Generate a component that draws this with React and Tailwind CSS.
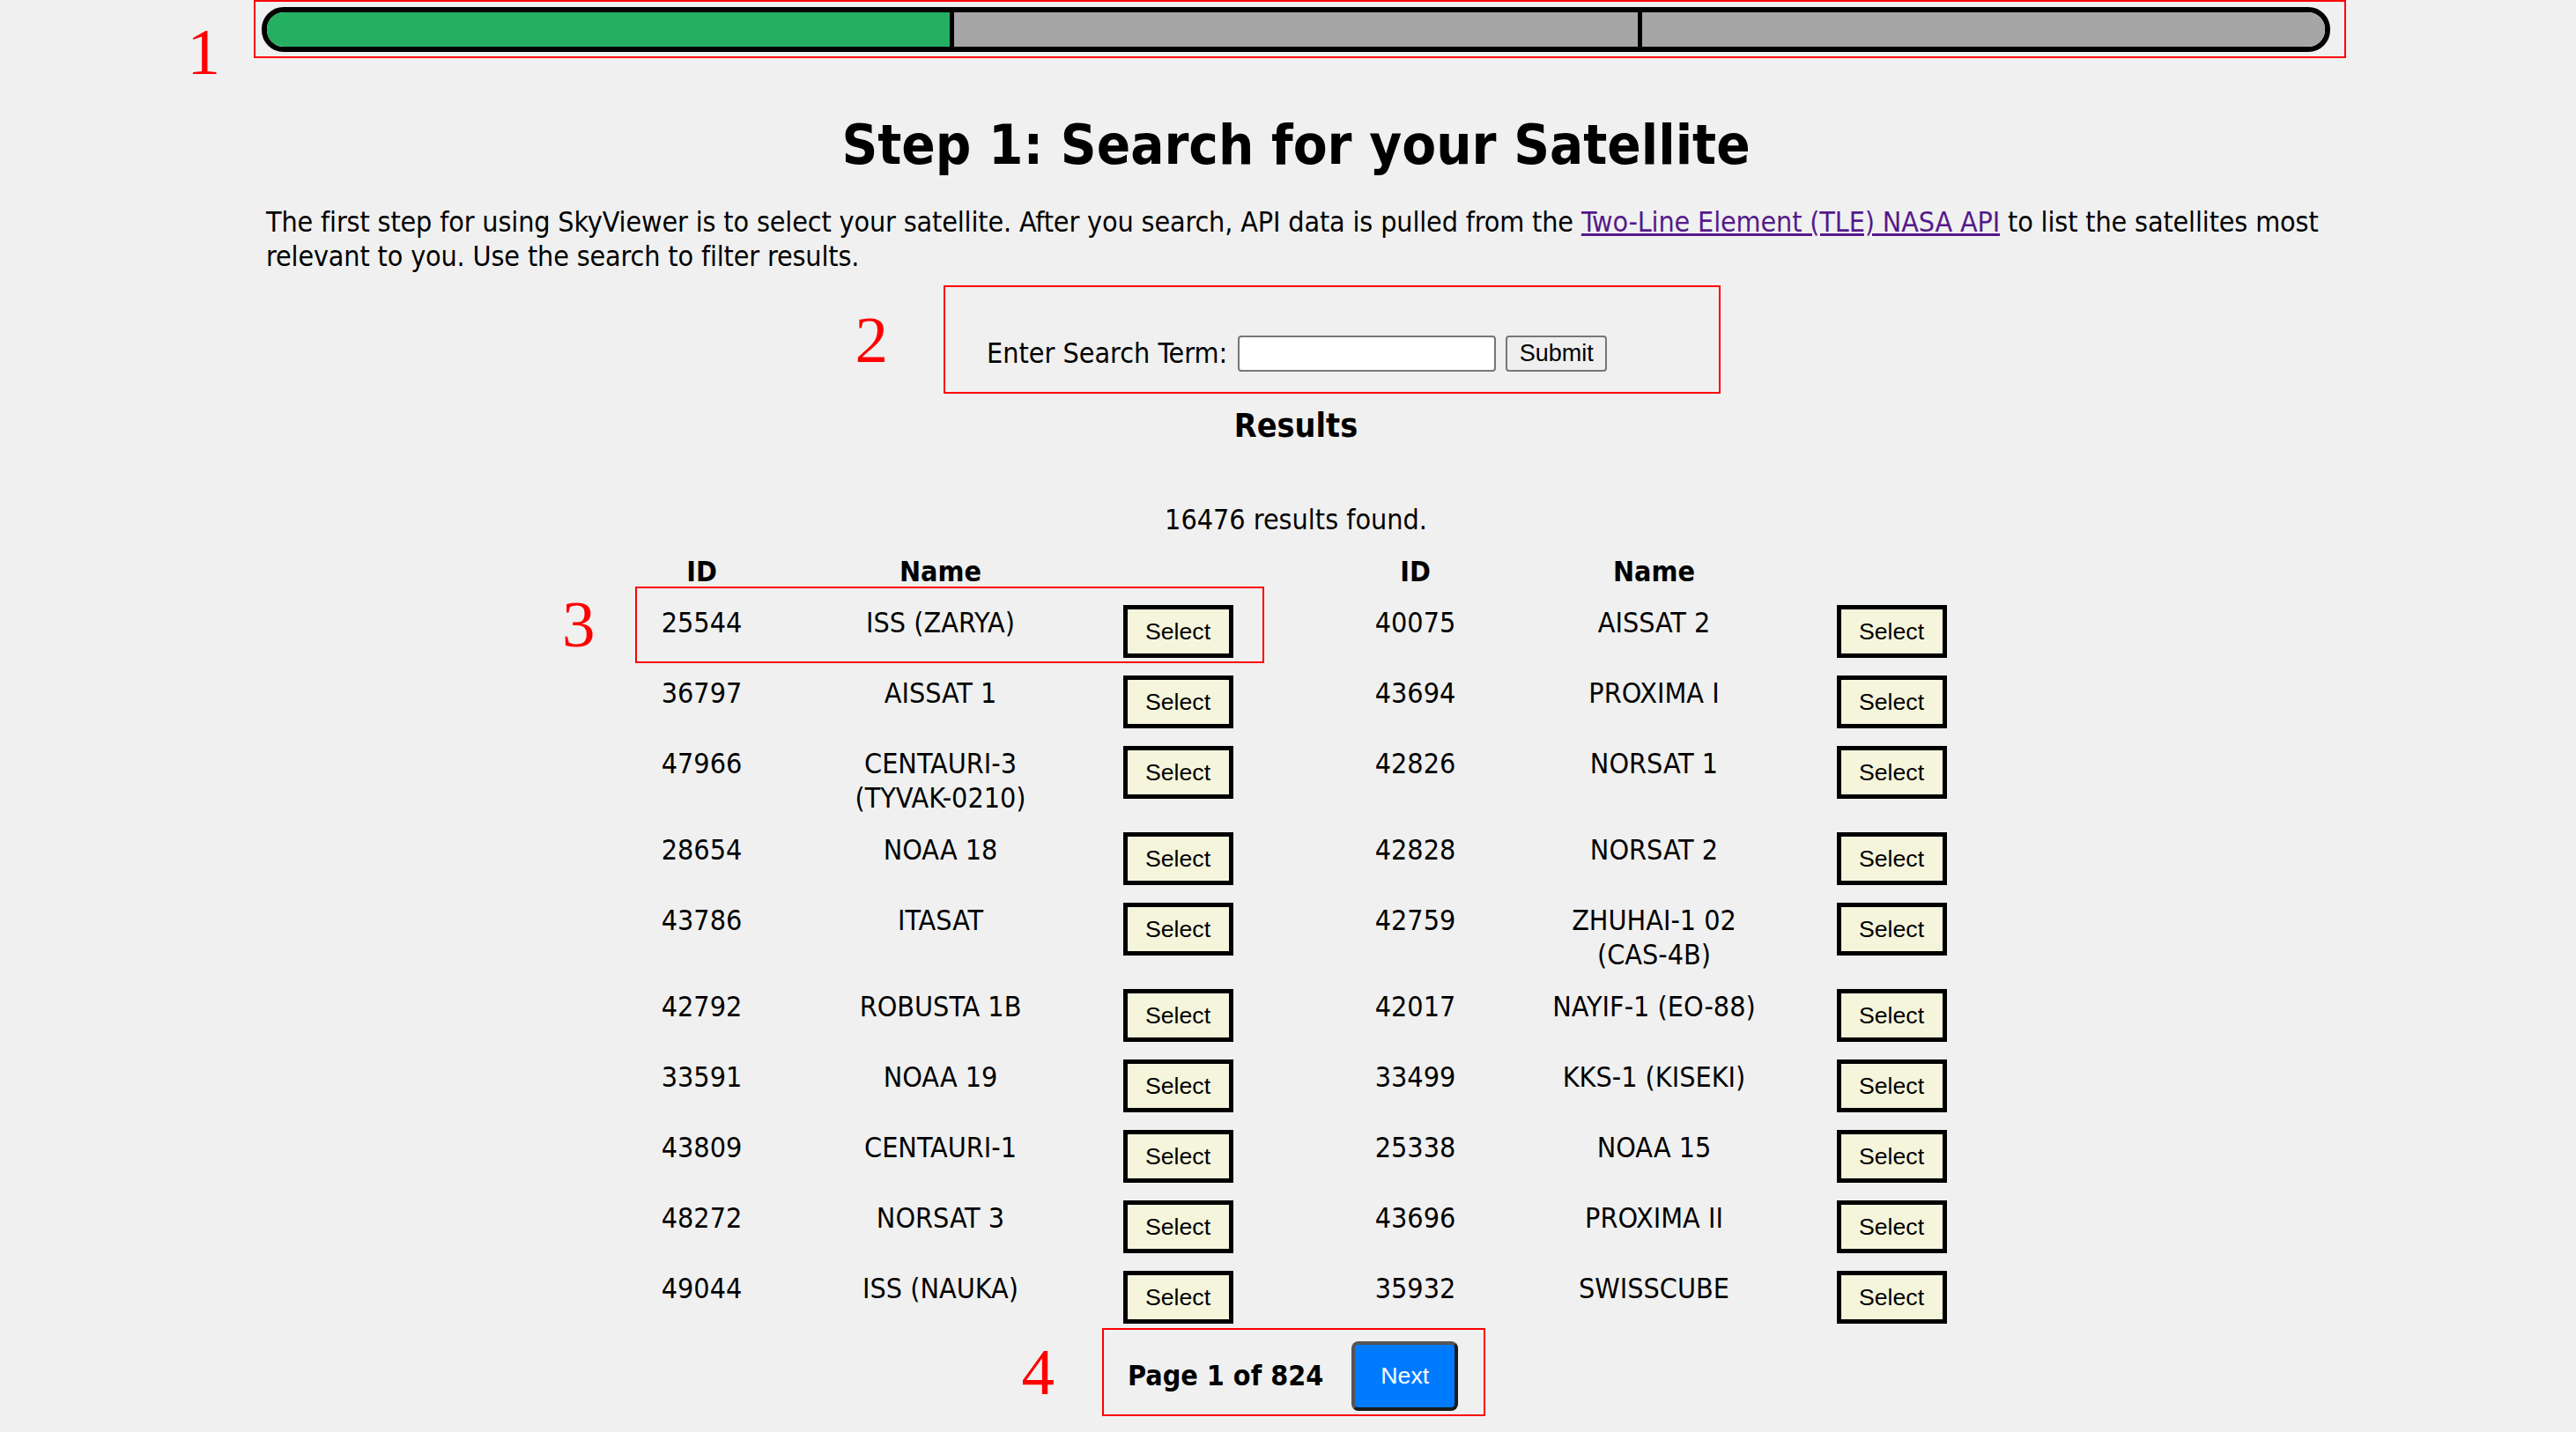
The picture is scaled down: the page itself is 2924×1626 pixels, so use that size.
import React from 'react';

// page font (Tahoma look-alike) and the default button font
const FONT = 'font-[family-name:"DejaVu_Sans_Condensed",Tahoma,"DejaVu_Sans",sans-serif]';
const BTN_FONT = 'font-[family-name:"Liberation_Sans",Arial,sans-serif]';

const rows = [
  [{ id: '25544', name: 'ISS (ZARYA)' }, { id: '40075', name: 'AISSAT 2' }],
  [{ id: '36797', name: 'AISSAT 1' }, { id: '43694', name: 'PROXIMA I' }],
  [{ id: '47966', name: 'CENTAURI-3 (TYVAK-0210)' }, { id: '42826', name: 'NORSAT 1' }],
  [{ id: '28654', name: 'NOAA 18' }, { id: '42828', name: 'NORSAT 2' }],
  [{ id: '43786', name: 'ITASAT' }, { id: '42759', name: 'ZHUHAI-1 02 (CAS-4B)' }],
  [{ id: '42792', name: 'ROBUSTA 1B' }, { id: '42017', name: 'NAYIF-1 (EO-88)' }],
  [{ id: '33591', name: 'NOAA 19' }, { id: '33499', name: 'KKS-1 (KISEKI)' }],
  [{ id: '43809', name: 'CENTAURI-1' }, { id: '25338', name: 'NOAA 15' }],
  [{ id: '48272', name: 'NORSAT 3' }, { id: '43696', name: 'PROXIMA II' }],
  [{ id: '49044', name: 'ISS (NAUKA)' }, { id: '35932', name: 'SWISSCUBE' }],
];

// red annotation digit
const Num = ({ className, children }) => (
  <span
    className={
      'absolute font-[family-name:"Liberation_Serif",serif] text-[75px] leading-none text-[#ff0000] ' +
      className
    }
  >
    {children}
  </span>
);

const Cell = ({ sat, boxed }) => (
  <div className="relative grid w-[691px] grid-cols-[152px_390px_149px] text-center leading-[39px]">
    {boxed && (
      <span className="absolute -top-[21px] left-0 h-[87px] w-[714px] border-2 border-[#ff0000]">
        <Num className="top-[3px] right-[calc(100%+47px)]">3</Num>
      </span>
    )}
    <div className="relative top-[1px]">{sat.id}</div>
    <div className="relative top-[1px] px-[70px]">{sat.name}</div>
    <div className="pl-[12px] text-left">
      <button
        className={`h-[60px] w-[125px] border-[5px] border-black bg-[#f5f5dc] text-[26.67px] leading-none ${BTN_FONT}`}
      >
        Select
      </button>
    </div>
  </div>
);

export default function App() {
  return (
    <div className={`min-h-screen bg-[#f0f0f0] text-black ${FONT}`}>
      <div className="ml-[297px] w-[2348px]">
        {/* 1: progress bar */}
        <div className="relative -ml-[9px] -mr-[18px] border-2 border-[#ff0000] pt-[6px] pb-[5px] pl-[7px] pr-[16px]">
          <Num className="top-[19px] right-[calc(100%+40px)]">1</Num>
          <div className="flex h-[51px] overflow-hidden rounded-[25px] border-[6px] border-black">
            <div className="flex-1 border-r-[5px] border-black bg-[#25af62]" />
            <div className="flex-1 border-r-[5px] border-black bg-[#a6a6a6]" />
            <div className="flex-1 bg-[#a6a6a6]" />
          </div>
        </div>

        <h1 className="mt-[61px] text-center text-[63px] font-bold leading-[75px]">
          Step 1: Search for your Satellite
        </h1>

        <p className="mt-[31px] px-[5px] text-[32px] leading-[39px] tracking-[-0.15px]">
          The first step for using SkyViewer is to select your satellite. After you search, API data is
          pulled from the{' '}
          <a href="#" className="text-[#551a8b] underline">
            Two-Line Element (TLE) NASA API
          </a>{' '}
          to list the satellites most relevant to you. Use the search to filter results.
        </p>

        {/* 2: search form */}
        <div className="relative mt-[13px] ml-[774px] w-[882px] border-2 border-[#ff0000] pt-[55px] pb-[23px] pl-[47px]">
          <Num className="top-[22px] right-[calc(100%+65px)]">2</Num>
          <div className="flex items-center text-[32px] leading-[39px]">
            <span>Enter Search Term:</span>
            <input className="ml-[12px] h-[41px] w-[293px] rounded-[4px] border-2 border-[#767676] bg-white" />
            <button
              className={`ml-[11px] h-[41px] w-[115px] rounded-[4px] border-2 border-[#767676] bg-[#efefef] text-[27px] leading-none ${BTN_FONT}`}
            >
              Submit
            </button>
          </div>
        </div>

        <h3 className="mt-[14px] text-center text-[37.4px] font-bold leading-[44px]">Results</h3>

        <p className="mt-[66px] text-center text-[32px] leading-[39px]">16476 results found.</p>

        {/* 3: results table */}
        <div className="mx-auto mt-[20px] w-[1501px] text-[32px] leading-[39px]">
          <div className="mb-[8px] flex gap-[119px] font-bold">
            {[0, 1].map((k) => (
              <div key={k} className="grid w-[691px] grid-cols-[152px_390px_149px] text-center">
                <div>ID</div>
                <div>Name</div>
                <div />
              </div>
            ))}
          </div>
          {rows.map((pair, i) => (
            <div key={i} className="flex items-start gap-[119px] py-[10px]">
              <Cell sat={pair[0]} boxed={i === 0} />
              <Cell sat={pair[1]} />
            </div>
          ))}
        </div>

        {/* 4: pagination */}
        <div className="relative -mt-[5px] ml-[954px] flex w-[435px] items-center border-2 border-[#ff0000] pt-[13px] pb-[4px] pl-[27px]">
          <Num className="top-[10px] right-[calc(100%+56px)]">4</Num>
          <span className="text-[32px] font-bold leading-[39px]">Page 1 of 824</span>
          <button
            className={`ml-[32px] h-[79px] w-[121px] rounded-[8px] border-4 border-[#1a1a1a] border-t-[#555] border-l-[#555] bg-[#007bff] text-[26.67px] leading-none text-white ${BTN_FONT}`}
          >
            Next
          </button>
        </div>
      </div>
    </div>
  );
}
